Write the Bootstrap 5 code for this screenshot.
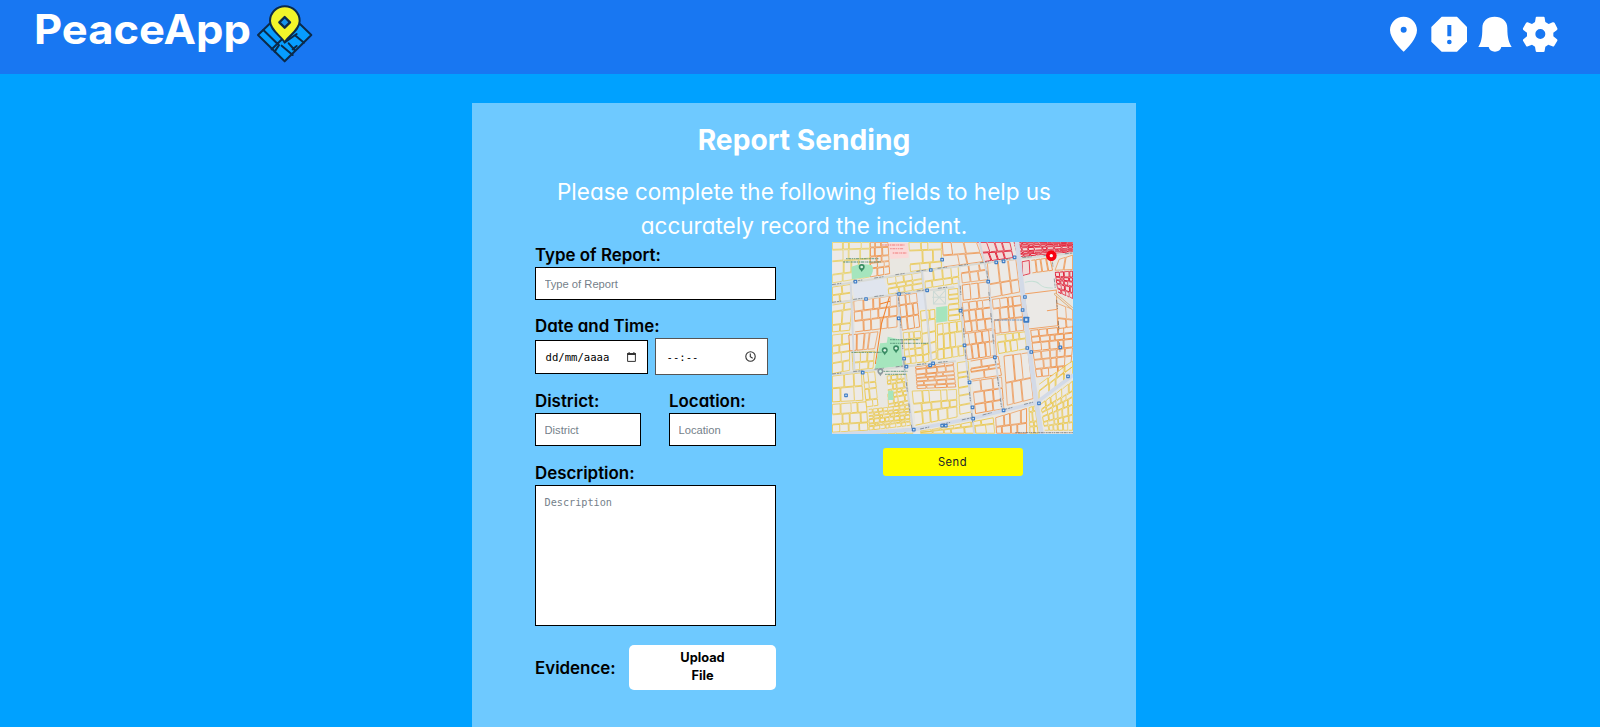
<!DOCTYPE html>
<html lang="en">
<head>
<meta charset="utf-8">
<meta name="viewport" content="width=device-width, initial-scale=1">
<title>PeaceApp - Report Sending</title>
<link href="https://cdn.jsdelivr.net/npm/bootstrap@5.3.0/dist/css/bootstrap.min.css" rel="stylesheet">
<style>
  body { background: #00a1ff; font-family: Inter, "Liberation Sans", sans-serif; font-feature-settings: "cv11"; color: #000; height: 727px; overflow: hidden; }
  .topbar { background: #1877f2; height: 74px; padding: 0 42px 0 35px; }
  .topbar svg { display: block; flex: none; }
  .report-panel { background: #6ec9ff; width: 664px; height: 660px; margin: 29px 0 0 472px; padding: 16px 63px 0; }
  .report-title { font-size: 28.2px; line-height: 42px; font-weight: 700; margin-bottom: 14px; }
  .report-intro { font-size: 22.5px; line-height: 33.5px; margin: 0 -10px; }
  .report-cols { gap: 56px; }
  .report-cols > div { width: 241px; }
  .field-label { font-size: 16.9px; line-height: 24px; padding-top: 1px; font-weight: 600; display: block; }
  .field-box.form-control { border: 1px solid #000; border-radius: 0; height: 33px; padding: 0 8.5px; font: 11.2px "Liberation Sans", sans-serif; color: #000; background: #fff; min-height: 0; }
  .field-box.form-control::placeholder { color: #757f8a; opacity: 1; }
  textarea.field-box.form-control { height: 141px; padding-top: 11px; resize: none; font: 10.2px "DejaVu Sans Mono", monospace; }
  .field-box.picker { font: 10.6px "DejaVu Sans Mono", monospace; height: 34px; width: 113px; padding: 0 11px 0 9.5px; }
  .field-box.picker-time { height: 37px; border-color: #555; padding-left: 10.5px; }
  .upload-btn, .upload-btn:hover { color: #000; background: #fff; }
  .upload-btn { width: 147px; height: 45px; border-radius: 5px; font-size: 12.8px; line-height: 18.5px; font-weight: 650; padding: 0 40px; }
  .send-btn { width: 140px; height: 28px; background: #ff0; border-radius: 3px; font-size: 11.2px; letter-spacing: .5px; padding: 0; line-height: 28px; }
  .map-box { display: block; width: 241px; height: 192px; }
</style>
</head>
<body>
<header class="topbar d-flex justify-content-between align-items-start">
  <div class="d-flex">
    <svg width="220" height="64" role="img"><text x="-1" y="43.5" fill="#fff" font-family="Inter, sans-serif" font-size="40.5" font-weight="700" textLength="217" lengthAdjust="spacingAndGlyphs" style="font-feature-settings:normal">PeaceApp</text></svg>
    <svg width="60" height="64" viewBox="765 0 180 192">
      <g stroke="#0b2a4a" stroke-width="6" stroke-linejoin="round" stroke-linecap="round">
        <path d="M854 28 934 105 854 184 774 105Z" fill="#069dff"/>
        <path d="M790 90 837 136M815 148 846 118M824 155 836 137M854 127 890 102M845 137 878 165M866 130 884 150M885 106 912 128M878 148 890 138" fill="none"/>
        <path d="M854 127C843 108 810 90 810 63a44 44 0 0 1 89 0C899 90 865 108 854 127Z" fill="#f1f52a"/>
        <path d="M854 51 870 67 854 83 838 67Z" fill="#1592ec" stroke-width="7"/>
      </g>
    </svg>
  </div>
  <nav class="d-flex" aria-label="Main">
    <svg width="170" height="74" viewBox="0 0 510 222" fill="#fff">
      <path fill-rule="evenodd" d="M47 50C24 50 6 68 6 90c0 25 28 53 41 65 13-12 40-40 40-65 0-22-18-40-40-40Zm0 30a9 9 0 1 1 0 18 9 9 0 0 1 0-18Z"/>
      <path fill-rule="evenodd" d="M161 50h46l30 31v44l-30 30h-46l-31-30V81ZM178 75h12v34h-12Zm6 44a7 7 0 1 0 0 14 7 7 0 0 0 0-14Z"/>
      <path d="M320 50c-22 0-37 13-37 34 0 31-4 43-12 57h31c2 9 9 14 19 14s17-5 19-14h31c-8-14-13-26-13-57 0-21-16-34-38-34Z"/>
      <path fill-rule="evenodd" d="M446 50h21q3 0 3 4l2 12 10 6 12-5q4-1 6 2l8 16q1 4-2 6l-10 7v11l10 8q3 2 2 5l-9 15q-2 4-6 2l-12-5-9 6-2 12q0 4-4 4h-19q-4 0-4-4l-2-12-9-6-12 5q-4 2-6-2l-9-15q-1-3 2-5l10-8V98l-10-7q-3-2-2-6l9-16q2-3 5-2l13 5 9-6 2-12q0-4 3-4Zm11 37a15 15 0 1 0 0 30 15 15 0 0 0 0-30Z"/>
    </svg>
  </nav>
</header>

<main class="report-panel">
  <h1 class="report-title text-white text-center">Report Sending</h1>
  <p class="report-intro text-white text-center">Please complete the following fields to help us<br>accurately record the incident.</p>
  <div class="report-cols d-flex">
    <div>
      <label class="field-label" for="type">Type of Report:</label>
      <input class="field-box form-control" id="type" placeholder="Type of Report">
      <span class="field-label" style="margin-top:13px">Date and Time:</span>
      <div class="d-flex align-items-center" style="gap:7px">
        <div class="field-box form-control picker d-flex align-items-center justify-content-between">dd/mm/aaaa
          <svg width="9" height="10" viewBox="0 0 9 10"><path d="M.6 1.6h7.8v7.8H.6Z" fill="none" stroke="#333" stroke-width="1"/><path d="M.2 1.1h8.6v1.8H.2ZM1.6 0h1v2h-1ZM6.400 0h1v2h-1Z" fill="#333"/></svg>
        </div>
        <div class="field-box form-control picker picker-time d-flex align-items-center justify-content-between">--:--
          <svg width="11" height="11" viewBox="0 0 11 11" fill="none" stroke="#333" stroke-width="1.1"><circle cx="5.5" cy="5.5" r="4.7"/><path d="M5.3 2.5v3.2l2.4 1.5"/></svg>
        </div>
      </div>
      <div class="d-flex justify-content-between" style="margin-top:13px">
        <div style="width:106px"><label class="field-label" for="district">District:</label><input class="field-box form-control" id="district" placeholder="District"></div>
        <div style="width:107px"><label class="field-label" for="location">Location:</label><input class="field-box form-control" id="location" placeholder="Location"></div>
      </div>
      <label class="field-label" for="description" style="margin-top:13.500px">Description:</label>
      <textarea class="field-box form-control" id="description" placeholder="Description"></textarea>
      <div class="d-flex align-items-center justify-content-between" style="margin-top:19px">
        <span class="field-label">Evidence:</span>
        <button class="btn upload-btn border-0" type="button">Upload File</button>
      </div>
    </div>
    <div class="d-flex flex-column align-items-center">
      <svg class="map-box" viewBox="36 34 722 576" preserveAspectRatio="none" id="map">
        <rect x="36" y="34" width="722" height="576" fill="#e9e7e1"/>
        <g fill="#e0e5ee">
          <path d="M95 158 190 142 208 192 105 208ZM290 185h28v50h-28Z"/>
        </g>
        <g id="blocks" stroke-linejoin="round"></g>
        <path d="M612 135 703 124 706 176 612 188Z" fill="#e8e8e8"/>
        <path d="M612 190 708 178 712 285 625 295ZM680 240 712 236" fill="#ebe9e6" stroke="#efa064" stroke-width="3"/>
        <g fill="#a5e5bd">
          <path d="M94 108q30-12 62-4 8 20-6 34l-54 8Z"/><path d="M348 230l34-4v46l-34 4Z"/>
          <path d="M180 338 200 336 203 318 245 328 250 405 164 416Z"/><path d="M204 480h16v28h-16Z"/>
          <path d="M205 36h58l3 45-55 4Z" fill="#fbd9d8"/>
        </g>
        <path d="M340 182l36-6v44h-36ZM340 182l36 38M376 178l-36 42M336 200h40" fill="none" stroke="#cbd9d5" stroke-width="3"/>
        <g fill="none" stroke="#d3dae7" stroke-linecap="round">
          <path d="M36 165 330 118 590 84 758 68M36 218 235 190 400 170M36 432 250 408 405 392" stroke="#d8dad6" stroke-width="6"/>
          <path d="M415 150 436 370 462 609M232 180 250 400 280 605M305 120 325 300 335 400M92 160 103 420M478 34 506 155 524 380 548 540" stroke="#d4d8de" stroke-width="6"/>
          <path d="M590 34 620 300 648 516 664 612" stroke-width="14"/>
          <path d="M36 612 280 597 460 562 648 516 758 434" stroke-width="11"/>
          <path d="M615 155q30-8 42 5t40 12" stroke="#c5dfd5" stroke-width="3"/>
          <path d="M705 190 758 235" stroke="#dba76e" stroke-width="7"/><path d="M705 190 758 235" stroke="#eee5da" stroke-width="3"/>
        </g>
        <g fill="none" stroke="#555e66" stroke-width="2.5" stroke-dasharray="12 3 7 2 4 36" opacity=".7">
          <path d="M36 162 330 116 590 82 758 67M36 215 235 188 400 167M36 430 250 406 405 390M300 595 460 560 640 514M420 165 436 370 460 600M235 200 252 400 276 600M500 120 524 380 545 540M695 80 712 240 720 380"/>
        </g>
        <g fill="none" stroke="#4c8a70" stroke-width="4" stroke-dasharray="5 2 9 2 3 2" opacity=".65">
          <path d="M78 84h98M70 94h112M210 327h88M210 338h116M94 365h92M190 422h72M195 431h64"/>
          <path d="M186 43h67M210 54h40M218 67h42" stroke="#f27878"/>
          <path d="M522 268h90M255 188h18" stroke="#5f93cc"/>
          <path d="M585 606h173" stroke="#737373"/>
        </g>
        <g id="stops" fill="#3c7bc4"></g>
        <g id="pins" fill="#398b63"></g>
        <circle cx="693" cy="75" r="10.500" fill="#fff" stroke="#f80010" stroke-width="11"/>
      </svg>
      <button class="btn send-btn border-0" type="button" style="margin-top:14px">Send</button>
    </div>
  </div>
</main>
<script src="https://cdn.jsdelivr.net/npm/bootstrap@5.3.0/dist/js/bootstrap.bundle.min.js"></script>
<script>
  // City blocks: each district is a quadrilateral divided into uneven cells.
  let seed = 17;
  const rnd = () => (seed = (seed * 16807) % 2147483647) / 2147483647;
  const Y = '#ecc22c', O = '#f0812c', R = '#e0122c', P = '#e9cd4c';
  const districts = [
    [[36,34],[150,34],[150,140],[36,158],4,4,P], [[150,34],[205,34],[210,130],[150,140],3,5,O],
    [[265,34],[365,34],[365,112],[270,124],3,3,Y], [[365,34],[470,34],[490,94],[370,110],3,2,O],
    [[36,168],[92,160],[98,210],[36,218],2,2,Y], [[200,140],[305,124],[310,175],[205,192],4,3,Y],
    [[310,120],[415,106],[418,158],[315,174],4,2,Y], [[420,105],[495,94],[505,148],[425,158],3,2,O],
    [[36,222],[98,212],[90,300],[36,305],2,3,Y], [[100,210],[232,192],[232,290],[104,305],5,3,O],
    [[235,194],[290,186],[300,290],[245,300],3,3,O], [[300,240],[345,235],[350,385],[310,398],2,5,Y],
    [[384,175],[414,172],[420,268],[384,272],1,6,Y], [[350,280],[425,270],[433,375],[352,388],4,3,Y],
    [[36,312],[90,306],[90,420],[36,430],2,4,Y], [[85,312],[175,302],[165,355],[88,362],4,1,O],
    [[95,365],[165,360],[160,414],[98,420],3,2,Y], [[248,305],[302,300],[310,395],[254,402],3,4,Y],
    [[425,215],[510,205],[518,295],[434,306],4,3,O], [[430,308],[525,296],[530,375],[440,388],5,2,O],
    [[500,96],[588,85],[600,185],[510,202],3,2,O], [[515,205],[602,194],[612,300],[524,310],4,3,O],
    [[528,312],[616,302],[620,355],[535,370],4,2,Y], [[630,298],[758,285],[758,350],[637,362],5,3,O],
    [[637,364],[758,350],[750,430],[648,440],5,3,O], [[632,88],[690,80],[698,120],[635,128],4,1,O],
    [[715,85],[758,72],[758,118],[703,120],2,1,O], [[425,162],[505,152],[510,200],[428,210],3,1,O],
    [[705,215],[758,235],[758,290],[715,295],2,2,O], [[450,390],[535,376],[545,435],[452,448],2,3,O],
    [[455,450],[545,438],[552,535],[465,550],3,3,O], [[550,375],[625,365],[640,505],[560,525],3,2,O],
    [[285,407],[400,393],[408,470],[290,475],4,6,O], [[410,395],[445,390],[455,545],[418,552],1,6,Y],
    [[36,435],[125,425],[130,510],[36,515],3,2,Y], [[36,520],[140,512],[145,600],[36,606],4,3,Y],
    [[128,425],[165,422],[175,525],[138,530],2,4,Y], [[200,435],[260,428],[268,520],[204,532],4,7,Y],
    [[145,535],[268,522],[272,585],[146,600],8,6,Y], [[275,480],[410,475],[412,560],[285,585],5,3,Y],
    [[150,604],[278,592],[280,609],[150,609],5,1,Y], [[300,602],[520,560],[525,609],[300,609],7,2,Y],
    [[525,560],[620,532],[620,609],[528,609],4,2,O], [[625,530],[645,524],[655,609],[628,609],2,4,Y],
    [[655,460],[758,390],[758,430],[655,510],4,2,Y], [[660,520],[758,450],[758,600],[672,600],6,6,Y],
    [[470,34],[570,34],[580,82],[492,94],4,2,R], [[580,34],[758,34],[758,64],[592,80],9,5,R],
    [[604,92],[628,88],[630,130],[606,136],1,1,R], [[703,124],[758,120],[758,205],[712,185],4,5,R]
  ];
  const at = (q, u, v) => [0, 1].map(i =>
    q[0][i]*(1-u)*(1-v) + q[1][i]*u*(1-v) + q[2][i]*u*v + q[3][i]*(1-u)*v);
  const cuts = n => Array.from({ length: n + 1 }, (_, i) => i === 0 || i === n ? i / n : (i + (rnd() - .5) * .5) / n);
  let out = '';
  for (const q of districts) {
    const vs = cuts(q[5]);
    for (let r = 0; r < q[5]; r++) {
      const us = cuts(q[4]);
      for (let c = 0; c < q[4]; c++) {
        const pts = [at(q, us[c], vs[r]), at(q, us[c+1], vs[r]), at(q, us[c+1], vs[r+1]), at(q, us[c], vs[r+1])];
        const mx = (pts[0][0] + pts[2][0]) / 2, my = (pts[0][1] + pts[2][1]) / 2;
        const d = pts.map(p => [(p[0] + Math.sign(mx - p[0]) * 1.3).toFixed(1), (p[1] + Math.sign(my - p[1]) * 1.3).toFixed(1)].join(' ')).join('L');
        out += `<path d="M${d}${rnd() < .2 ? '' : 'Z'}" fill="${q[6] === R ? '#f3d9d9' : '#eeebe8'}" stroke="${q[6]}" stroke-width="${q[6] === R ? 2.8 : 2.3}" opacity="${(.7 + rnd() * .3).toFixed(2)}"/>`;
      }
    }
  }
  out += `<path d="M208 198 184 280 166 400M180 220l30-8" fill="none" stroke="${O}" stroke-width="3"/>`;
  document.getElementById('blocks').innerHTML = out;
  const stop = (x, y, s) => `<rect x="${x-s/2}" y="${y-s/2}" width="${s}" height="${s}" rx="2"/><rect x="${x-s/5}" y="${y-s/5}" width="${s/2.5}" height="${s/2.5}" fill="#d5e5f7"/>`;
  document.getElementById('stops').innerHTML = [[106,153],[138,205],[237,190],[321,179],[332,118],[366,87],[528,95],[550,92],[583,80],[504,153],[421,240],[236,263],[433,344],[252,384],[259,408],[128,426],[330,404],[339,398],[78,494],[448,455],[457,530],[459,564],[550,539],[366,585],[377,585],[281,597],[656,518],[633,364],[621,352],[607,238],[614,199],[524,380],[720,350],[743,437]]
    .map(p => stop(p[0], p[1], 11)).join('') + stop(618, 267, 18);
  document.getElementById('pins').innerHTML = [[125,110],[194,360],[228,354],[181,423,'#8b979d']]
    .map(p => `<path fill="${p[2] || '#398b63'}" d="M${p[0]} ${p[1]+14}c-3-7-9-8-9-15a9 9 0 0 1 18 0c0 7-6 8-9 15Z"/><circle cx="${p[0]}" cy="${p[1]-1}" r="4" fill="#d9f1e2"/>`).join('');
</script>
</body>
</html>
